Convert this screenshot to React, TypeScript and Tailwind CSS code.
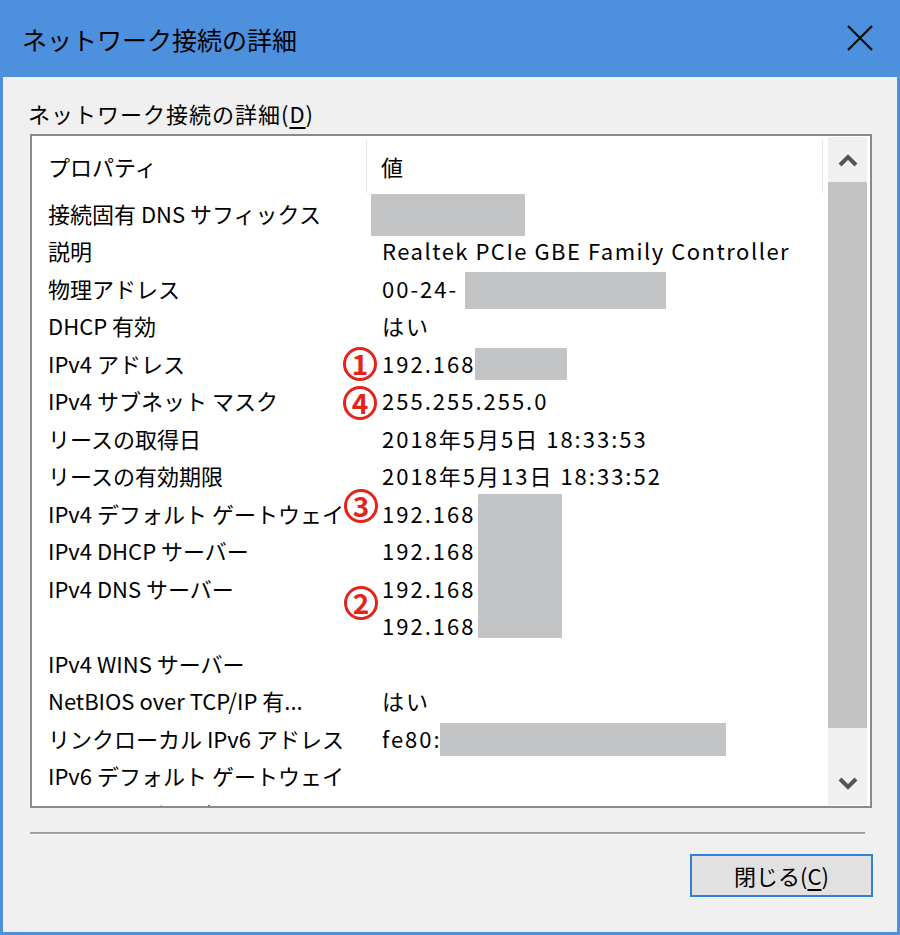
import React from "react";

type Row = { name: string; value?: React.ReactNode; narrow?: boolean };

const rows: Row[] = [
  { name: "接続固有 DNS サフィックス", value: "" },
  { name: "説明", value: "Realtek PCIe GBE Family Controller", narrow: true },
  { name: "物理アドレス", value: "00-24-" },
  { name: "DHCP 有効", value: "はい" },
  { name: "IPv4 アドレス", value: "192.168" },
  { name: "IPv4 サブネット マスク", value: "255.255.255.0" },
  { name: "リースの取得日", value: "2018年5月5日 18:33:53" },
  { name: "リースの有効期限", value: "2018年5月13日 18:33:52" },
  { name: "IPv4 デフォルト ゲートウェイ", value: "192.168" },
  { name: "IPv4 DHCP サーバー", value: "192.168" },
  { name: "IPv4 DNS サーバー", value: "192.168" },
  { name: "", value: "192.168" },
  { name: "IPv4 WINS サーバー", value: "" },
  { name: "NetBIOS over TCP/IP 有...", value: "はい" },
  { name: "リンクローカル IPv6 アドレス", value: "fe80:" },
  { name: "IPv6 デフォルト ゲートウェイ", value: "" },
  { name: "IPv6 DNS サーバー", value: "" },
];

function Circled({ n, className }: { n: string; className: string }) {
  return (
    <div
      className={
        "absolute w-[34px] h-[34px] rounded-full border-[3px] border-[#e3241b] bg-white flex items-center justify-center text-[#e3241b] font-bold text-[28px] leading-none " +
        className
      }
    >
      <span className="mt-[-2px]">{n}</span>
    </div>
  );
}

export default function App() {
  return (
    <div className="w-[900px] h-[935px] bg-[#4d90de] flex flex-col font-['Noto_Sans_CJK_JP','Noto_Sans',sans-serif] text-black">
      {/* Title bar */}
      <div className="h-[77px] flex items-center pl-[22px] pr-[27px] shrink-0">
        <div className="text-[25px] leading-none pt-[2px] flex-1">ネットワーク接続の詳細</div>
        <svg width="26" height="26" viewBox="0 0 26 26" className="mt-[-2px]">
          <path d="M1 1 L25 25 M25 1 L1 25" stroke="#111" strokeWidth="2.4" />
        </svg>
      </div>

      {/* Body */}
      <div className="flex-1 bg-[#f0f0f0] mx-[3px] mb-[3px] flex flex-col">
        <div className="pl-[25px] mt-[21px] h-[30px] leading-[30px] text-[22px] tracking-[1px]">
          ネットワーク接続の詳細(<span className="underline underline-offset-4">D</span>)
        </div>

        {/* List box */}
        <div className="relative ml-[27px] mt-[6px] w-[842px] h-[674px] border-2 border-[#8a8a8a] bg-white flex overflow-hidden">
          <div className="w-[796px] flex flex-col text-[22px]">
            {/* Header */}
            <div className="h-[61px] flex shrink-0">
              <div className="w-[335px] flex items-center pl-[16px] border-r border-[#e3e3e3] my-[4px]">
                プロパティ
              </div>
              <div className="w-[456px] flex items-center pl-[14px] border-r border-[#e3e3e3] my-[4px]">
                値
              </div>
            </div>
            {rows.map((r, i) => (
              <div key={i} className="h-[37.5px] flex items-center shrink-0 whitespace-nowrap pb-[5px]">
                <div className="w-[335px] pl-[16px]">{r.name}</div>
                <div className={r.narrow ? "pl-[15px] tracking-[1.5px]" : "pl-[15px] tracking-[2px]"}>{r.value}</div>
              </div>
            ))}
          </div>

          {/* Scrollbar */}
          <div className="w-[39px] bg-[#f0f0f0] my-[1px] flex flex-col">
            <div className="h-[45px] flex items-center justify-center">
              <svg width="20" height="14" viewBox="0 0 20 14">
                <path d="M2 12 L10 4 L18 12" stroke="#555" strokeWidth="4" fill="none" />
              </svg>
            </div>
            <div className="h-[546px] bg-[#c2c2c2]" />
            <div className="flex-1" />
            <div className="h-[42px] flex items-center justify-center">
              <svg width="20" height="14" viewBox="0 0 20 14">
                <path d="M2 2 L10 10 L18 2" stroke="#555" strokeWidth="4" fill="none" />
              </svg>
            </div>
          </div>

          {/* Redactions */}
          <div className="absolute left-[339px] top-[58px] w-[154px] h-[42px] bg-[#c3c4c6]" />
          <div className="absolute left-[433px] top-[136px] w-[201px] h-[37px] bg-[#c3c4c6]" />
          <div className="absolute left-[443px] top-[212px] w-[92px] h-[32px] bg-[#c3c4c6]" />
          <div className="absolute left-[446px] top-[358px] w-[84px] h-[144px] bg-[#c3c4c6]" />
          <div className="absolute left-[408px] top-[587px] w-[286px] h-[33px] bg-[#c3c4c6]" />

          {/* Annotations */}
          <Circled n="1" className="left-[311px] top-[211px]" />
          <Circled n="4" className="left-[311px] top-[250px]" />
          <Circled n="3" className="left-[312px] top-[353px]" />
          <Circled n="2" className="left-[312px] top-[450px]" />
        </div>

        {/* Separator */}
        <div className="ml-[27px] mt-[24px] w-[835px] h-[3px] border-t-2 border-[#a0a0a0] border-b border-b-white" />

        {/* Button */}
        <div className="flex justify-end mr-[24px] mt-[19px]">
          <div className="w-[183px] h-[43px] border-2 border-[#2f7fdb] bg-[#e1e1e1] flex items-center justify-center text-[22px]">
            閉じる(<span className="underline underline-offset-4">C</span>)
          </div>
        </div>
      </div>
    </div>
  );
}
